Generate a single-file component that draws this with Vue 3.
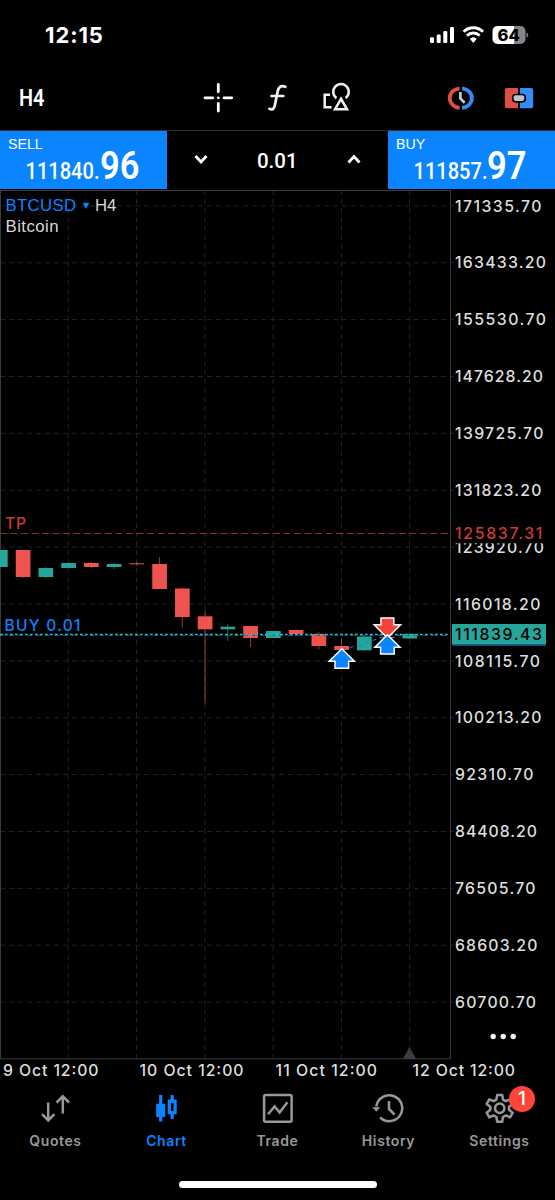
<script setup>
import { computed, ref } from 'vue';

const volume = ref('0.01');
const activeTab = ref('Chart');

const tabs = [
  { name: 'Quotes' },
  { name: 'Chart' },
  { name: 'Trade' },
  { name: 'History' },
  { name: 'Settings', badge: 1 }
];

// [price, label width]
const prices = [
  ['171335.70', 87.5], ['163433.20', 92], ['155530.70', 92],
  ['147628.20', 89], ['139725.70', 89.5], ['131823.20', 87.5],
  ['123920.70', 90], ['116018.20', 86.5], ['108115.70', 86],
  ['100213.20', 87.5], ['92310.70', 79.5], ['84408.20', 83],
  ['76505.70', 81.5], ['68603.20', 83.5], ['60700.70', 82]
];

const gridX = [0.5, 68.3, 136.5, 204.8, 273.2, 341.4, 409.6];

const dates = [
  { x: 3, width: 95.5, text: '9 Oct 12:00' },
  { x: 139.5, width: 104, text: '10 Oct 12:00' },
  { x: 275.5, width: 101.5, text: '11 Oct 12:00' },
  { x: 412.5, width: 102.5, text: '12 Oct 12:00' }
];

// [direction, body top, body bottom, wick top, wick bottom]
const bars = [
  ['up', 550, 567, 550, 567],
  ['down', 550, 577, 550, 578],
  ['up', 568, 577, 567, 578],
  ['up', 563, 568, 562.5, 568],
  ['down', 563, 567, 562, 568.5],
  ['up', 564, 567, 563, 569],
  ['down', 563.3, 564.3, 562, 566],
  ['down', 564, 589, 557, 589],
  ['down', 588.5, 617, 587.5, 627.5],
  ['down', 616.3, 629.3, 610.5, 703.5],
  ['up', 626.7, 629.3, 624, 641],
  ['down', 626, 638, 626, 647],
  ['up', 631, 638, 630.5, 638],
  ['down', 630, 634, 629.5, 636],
  ['down', 634, 646, 632, 649.5],
  ['down', 646, 650, 638, 651],
  ['up', 636.5, 650.3, 636, 651],
  ['down', 637, 638, 636, 639],
  ['up', 634, 638.5, 633.5, 639]
];

const rows = computed(() => {
  return prices.map(([text, width], i) => ({ text, width, y: 205.9 + i * 56.87 }));
});

const candles = computed(() => {
  return bars.map(([dir, top, bottom, high, low], i) => ({
    dir, top, bottom, high, low, x: 0.3 + i * 22.75
  }));
});
</script>

<template>
  <div class="app">
    <header class="status-bar">
      <span class="time">12:15</span>
      <svg class="status-icons" width="100" height="20" viewBox="429 25 100 20">
        <g fill="#fff">
          <rect x="430" y="37.3" width="4" height="5.7" rx="1.2" />
          <rect x="436.7" y="34.5" width="4" height="8.5" rx="1.2" />
          <rect x="443.3" y="31" width="4" height="12" rx="1.2" />
          <rect x="450" y="27" width="4" height="16" rx="1.2" />
          <path d="M469.8 38.8a5.2 5.2 0 0 1 7 0l-3.5 4.2z" />
        </g>
        <path
          d="M463.6 31.7a14 14 0 0 1 19.4 0M467 35.6a9 9 0 0 1 12.6 0"
          fill="none"
          stroke="#fff"
          stroke-width="2.9"
        />
        <path d="M497.5 26H514v18h-16.5a5 5 0 0 1-5-5v-8a5 5 0 0 1 5-5z" fill="#fff" />
        <path d="M514 26h6.5a5 5 0 0 1 5 5v8a5 5 0 0 1-5 5H514z" fill="#858585" />
        <path d="M526.5 32.5q1.8.8 1.8 2.500t-1.8 2.500z" fill="#858585" />
        <text class="battery-text" x="508.7" y="40.7" text-anchor="middle">64</text>
      </svg>
    </header>

    <nav class="toolbar">
      <svg class="period" width="30" height="30" viewBox="0 0 30 30">
        <text x="0" y="23.8" textLength="25.5" lengthAdjust="spacingAndGlyphs">H4</text>
      </svg>
      <div class="tools">
        <svg width="60" height="40" viewBox="188 77 60 40">
          <path
            d="M218.3 84.3v7.5M218.3 103.5v7.5M205 97.8h7.7M224 97.8h7.7"
            stroke="#fff"
            stroke-width="2.8"
            stroke-linecap="round"
          />
          <circle cx="218.3" cy="97.8" r="1.4" fill="#fff" />
        </svg>
        <svg width="60" height="40" viewBox="248 77 60 40">
          <path
            d="M285.3 86.8c-4-2-6.700.2-7.600 4.500l-2.700 13.200c-.8 4.200-2.400 6-5.600 4.300M271.500 96h11.8"
            fill="none"
            stroke="#f2f2f2"
            stroke-width="2.7"
            stroke-linecap="round"
          />
        </svg>
        <svg width="60" height="40" viewBox="308 77 60 40">
          <g fill="none" stroke="#f2f2f2" stroke-width="2.5">
            <path d="M330 94.7h-5.3v12.5h6.8" />
            <path d="M336.4 98.1a7.8 7.8 0 1 1 9.2 0" stroke-width="2.6" />
            <path d="M341 98.8l-6 10.5h12z" />
          </g>
        </svg>
      </div>
      <div class="tools trade-tools">
        <svg width="59" height="40" viewBox="431 77 59 40">
          <path d="M459.600 88.300c-5.500.5-9.900 4.500-9.900 9.800s4.400 9.300 9.900 9.800" fill="none" stroke="#dc5046" stroke-width="3.8" />
          <path d="M462 88.300c5.500.5 9.900 4.500 9.900 9.800s-4.400 9.300-9.900 9.800" fill="none" stroke="#348bf3" stroke-width="3.8" />
          <path d="M460.4 92v6.500l4.200 4.200" fill="none" stroke="#c1c7cc" stroke-width="2.7" />
        </svg>
        <svg width="59" height="40" viewBox="490 77 59 40">
          <path d="M506.8 88h11.3v20.2h-11.3a2 2 0 0 1-2-2V90a2 2 0 0 1 2-2z" fill="#dc5046" />
          <path d="M519.8 88h11.4a2 2 0 0 1 2 2v16.2a2 2 0 0 1-2 2h-11.4z" fill="#348bf3" />
          <rect x="512.7" y="94.5" width="12.5" height="7.3" rx="3" fill="#bec4ca" stroke="#000" stroke-width="1.7" />
        </svg>
      </div>
    </nav>

    <section class="order-bar">
      <button class="deal">
        <span class="deal-label">SELL</span>
        <svg class="quote" width="166" height="38" viewBox="0 148 166 38">
          <text class="quote-main" x="25.5" y="179.4" textLength="74" lengthAdjust="spacingAndGlyphs">111840.</text>
          <text class="quote-pips" x="100" y="179.4" textLength="39.5" lengthAdjust="spacingAndGlyphs">96</text>
        </svg>
      </button>
      <div class="volume">
        <svg width="14" height="12" viewBox="0 0 14 12">
          <path d="M1.5 2L7 7.900l5.500-5.900" />
        </svg>
        <span class="volume-value">{{ volume }}</span>
        <svg width="14" height="12" viewBox="0 0 14 12">
          <path d="M1.5 8.500L7 2.600l5.500 5.900" />
        </svg>
      </div>
      <button class="deal">
        <span class="deal-label">BUY</span>
        <svg class="quote" width="166" height="38" viewBox="388 148 166 38">
          <text class="quote-main" x="413.5" y="179.4" textLength="74" lengthAdjust="spacingAndGlyphs">111857.</text>
          <text class="quote-pips" x="487" y="179.4" textLength="39.5" lengthAdjust="spacingAndGlyphs">97</text>
        </svg>
      </button>
    </section>

    <svg class="chart" width="555" height="890" viewBox="0 190 555 890">
      <g class="grid">
        <line v-for="x in gridX" :key="x" :x1="x" :x2="x" y1="190" y2="1062" />
        <line v-for="row in rows" :key="row.text" x1="0" x2="454" :y1="row.y" :y2="row.y" />
      </g>
      <path class="frame" d="M0 190.5H450.5V1058.8H0M.5 190V1058" />
      <path class="shift-mark" d="M409.5 1047l6.8 12h-13.6z" />

      <!-- symbol -->
      <g class="symbol">
        <text class="symbol-name" x="5.5" y="210.5" textLength="70.5">BTCUSD</text>
        <path d="M82.7 202.7h6.6l-3.3 6.4z" />
        <text x="95" y="210.5">H4</text>
        <text x="5.5" y="231.5" textLength="53">Bitcoin</text>
      </g>

      <!-- candles -->
      <g v-for="c in candles" :key="c.x" :class="c.dir">
        <line class="wick" :x1="c.x" :x2="c.x" :y1="c.high" :y2="c.low" />
        <rect :x="c.x - 7.3" :y="c.top" width="14.7" :height="c.bottom - c.top" />
      </g>

      <!-- levels -->
      <line class="tp-line" x1="0" x2="450" y1="533.5" y2="533.5" />
      <line class="buy-line" x1="0" x2="450" y1="635.3" y2="635.3" />
      <line class="bid-line" x1="0" x2="450" y1="634.4" y2="634.4" />
      <text class="level tp" x="5" y="529">TP</text>
      <text class="level buy" x="4.5" y="631" textLength="77">BUY 0.01</text>

      <!-- deals -->
      <path class="deal-link" d="M342 650L387 636" />
      <path class="deal-mark sell-mark" d="M381 618h12.800v6.700h6.800L387.400 638l-13.200-13.300h6.800z" />
      <path class="deal-mark buy-mark" d="M341.8 648.800l12.600 12.500h-5.800v7h-13.600v-7h-5.800z" />
      <path class="deal-mark buy-mark" d="M387.4 634.800l12.600 12.500h-5.800v6.700h-13.600v-6.700h-5.800z" />

      <!-- price scale -->
      <g class="scale">
        <text v-for="row in rows" :key="row.text" x="455" :y="row.y + 5.7" :textLength="row.width">{{ row.text }}</text>
        <rect class="scale-mask" x="452" y="526" width="100" height="17.3" />
        <text class="tp" x="455" y="539.2" textLength="88.5">125837.31</text>
        <rect class="buy-tag" x="452" y="626" width="94" height="20" />
        <rect class="bid-tag" x="452" y="624" width="94" height="20.3" />
        <text class="bid-text" x="455" y="640" textLength="88">111839.43</text>
      </g>

      <g class="more">
        <circle cx="493.2" cy="1036.5" r="2.7" />
        <circle cx="503.2" cy="1036.5" r="2.7" />
        <circle cx="513.2" cy="1036.5" r="2.7" />
      </g>

      <g class="dates">
        <text v-for="d in dates" :key="d.text" :x="d.x" y="1076" :textLength="d.width">{{ d.text }}</text>
      </g>
    </svg>

    <footer class="tab-bar">
      <div
        v-for="tab in tabs"
        :key="tab.name"
        class="tab"
        :class="{ active: tab.name === activeTab }"
        @click="activeTab = tab.name"
      >
        <svg class="tab-icon" width="36" height="36" viewBox="-18 -18 36 36">
          <g v-if="tab.name === 'Quotes'">
            <path d="M-7.800-5.500V12M-14 6.200l6.200 6.200 6.200-6.200M6.800 5.500V-11.500M.6-5.500l6.200-6.200 6.200 6.200" />
          </g>
          <g v-else-if="tab.name === 'Chart'" class="solid">
            <path d="M-7.900-13h3.200v8.700h2.900V9h-2.900v4.500h-3.200V9h-2.900V-4.300h2.900zM3.600-13h3.200v4.500h2.900V6.300H6.800V11H3.600V6.300H.7V-8.500h2.900zM3.900-5.300v8.400h2.600v-8.400z" fill-rule="evenodd" />
          </g>
          <g v-else-if="tab.name === 'Trade'">
            <rect x="-13.9" y="-13" width="27.5" height="26.8" rx="1.5" />
            <path d="M-9.900 6.300l6.500-7.800 5 6L9.400-5.700" />
          </g>
          <g v-else-if="tab.name === 'History'">
            <path d="M-12.700-1.500A13 13 0 1 1-8.900 9.500" />
            <path d="M0-7v8L5.500 6.500" />
            <path class="solid" d="M-16.800-.8h8.200l-4.100 4.300z" />
          </g>
          <g v-else stroke-linejoin="round">
            <path d="M-2.800-13.100h5l.8 4.700 2.800 1.600 4.300-1.900 2.600 4.600-3.700 2.900v3l3.700 2.900-2.600 4.600-4.300-1.900-2.800 1.600-.8 4.700h-5l-.8-4.700-2.800-1.600-4.300 1.900-2.600-4.600 3.700-2.900v-3l-3.700-2.900 2.600-4.600 4.300 1.900 2.800-1.600z" />
            <circle cx="-.3" cy=".3" r="4.7" />
          </g>
        </svg>
        <span class="tab-name">{{ tab.name }}</span>
        <span v-if="tab.badge" class="badge">{{ tab.badge }}</span>
      </div>
    </footer>

    <div class="home-indicator" />
  </div>
</template>

<style>
body {
  background: #000;
}
</style>

<style scoped>
.app {
  width: 555px;
  height: 1200px;
  overflow: hidden;
  background: #000;
  color: #fff;
  font-family: Inter, sans-serif;
}

.app svg {
  display: block;
  flex-shrink: 0;
  overflow: visible;
}

.status-bar {
  display: flex;
  justify-content: space-between;
  align-items: center;
  box-sizing: border-box;
  height: 65px;
  padding: 5px 26px 0 45px;
}

.time {
  font-size: 22px;
  font-weight: 700;
  letter-spacing: 0.9px;
}

.battery-text {
  font-size: 16.5px;
  font-weight: 800;
  fill: #000;
}

.toolbar {
  display: flex;
  align-items: center;
  box-sizing: border-box;
  height: 65px;
  padding: 0 0 1px 19px;
}

.period {
  font-family: Roboto, sans-serif;
  font-size: 23.5px;
  font-weight: 600;
  fill: #fff;
}

.tools {
  display: flex;
  margin-left: 139px;
}

.trade-tools {
  margin-left: 63px;
}

.order-bar {
  display: flex;
  box-sizing: border-box;
  height: 60px;
  border-top: 1px solid #303234;
  padding-bottom: 1px;
}

.deal {
  display: flex;
  flex-direction: column;
  width: 166.5px;
  padding: 0;
  border: 0;
  background: #0a84ff;
  color: #fff;
  text-align: left;
}

.deal-label {
  height: 17px;
  padding: 5px 0 0 8px;
  font-family: "Liberation Sans", sans-serif;
  font-size: 14.2px;
  line-height: 17px;
  box-sizing: border-box;
}

.quote {
  fill: #fff;
  font-family: Roboto, sans-serif;
  font-weight: 500;
}

.quote-main {
  font-size: 23px;
}

.quote-pips {
  font-size: 38.5px;
  font-weight: 600;
}

.volume {
  display: flex;
  justify-content: space-between;
  align-items: center;
  box-sizing: border-box;
  width: 221.5px;
  padding: 0 27.5px;
}

.volume-value {
  padding-top: 2px;
  font-family: Roboto, sans-serif;
  font-size: 20.5px;
  font-weight: 500;
}

.volume path {
  fill: none;
  stroke: #fff;
  stroke-width: 2.9;
}

.grid line {
  stroke: #22242a;
  stroke-width: 1;
  stroke-dasharray: 5 4;
}

.frame {
  fill: none;
  stroke: #3a3b3d;
}

.shift-mark {
  fill: #3d3d40;
}

.symbol {
  font-family: "Liberation Sans", sans-serif;
  font-size: 16.8px;
  fill: #d8d8d8;
}

.symbol-name,
.symbol path {
  fill: #0a84ff;
}

.up rect {
  fill: #26a69a;
}

.down rect {
  fill: #ef5350;
}

.wick {
  stroke: #26a69a;
  stroke-width: 1;
  opacity: 0.65;
}

.down .wick {
  stroke: #ef5350;
}

.tp-line {
  stroke: #96302d;
  stroke-dasharray: 7 3.5;
}

.buy-line {
  stroke: #0b5c9e;
  stroke-dasharray: 5 4;
}

.bid-line {
  stroke: #2fc0b4;
  stroke-width: 1.5;
  stroke-dasharray: 2.7 2.3;
}

.level {
  font-size: 15.5px;
  font-weight: 500;
  letter-spacing: 1px;
}

.tp {
  fill: #cf3a35;
}

.buy {
  fill: #0a84ff;
}

.deal-link {
  stroke: #0a84ff;
  stroke-dasharray: 4 4;
}

.deal-mark {
  stroke: #fff;
  stroke-width: 1.5;
}

.sell-mark {
  fill: #f44336;
}

.buy-mark {
  fill: #0a84ff;
}

.scale,
.dates {
  font-size: 15.8px;
  font-weight: 500;
  fill: #dedede;
}

.scale {
  letter-spacing: 1.1px;
}

.scale .tp {
  fill: #cf3a35;
}

.scale-mask {
  fill: #000;
}

.bid-tag {
  fill: #26a69a;
}

.buy-tag {
  fill: #0b4b73;
}

.scale .bid-text {
  fill: #000;
}

.more {
  fill: #f0f0f0;
}

.tab-bar {
  display: flex;
  height: 85px;
}

.tab {
  position: relative;
  display: flex;
  flex-direction: column;
  align-items: center;
  width: 111px;
  padding-top: 10px;
  box-sizing: border-box;
  color: #98989c;
}

.tab.active {
  color: #0a84ff;
}

.tab-icon {
  fill: none;
  stroke: currentColor;
  stroke-width: 2.5;
}

.solid {
  fill: currentColor;
  stroke: none;
}

.tab-name {
  margin-top: 6px;
  font-size: 14px;
  font-weight: 600;
  line-height: 17px;
  letter-spacing: 0.6px;
}

.badge {
  position: absolute;
  top: 6px;
  left: 65px;
  width: 26px;
  height: 26px;
  border-radius: 50%;
  background: #ff453a;
  color: #fff;
  font-size: 19px;
  font-weight: 500;
  line-height: 26px;
  text-align: center;
}

.home-indicator {
  width: 198px;
  height: 7px;
  margin: 16px auto 0;
  border-radius: 4px;
  background: #fff;
}
</style>
